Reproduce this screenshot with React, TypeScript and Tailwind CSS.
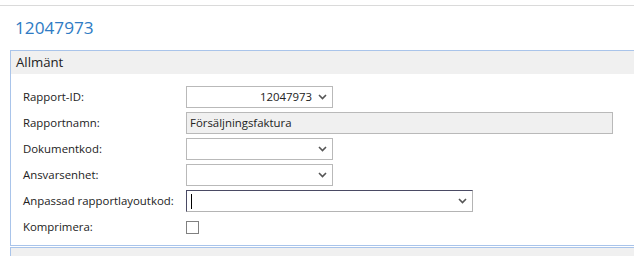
import React from 'react';

function Chevron() {
  return (
    <svg width="9" height="6" viewBox="0 0 9 6" className="shrink-0">
      <polyline points="1,1 4.5,4.5 8,1" fill="none" stroke="#555" strokeWidth="1.6" />
    </svg>
  );
}

function SelectBox({ value, width, focused }: { value?: string; width: string; focused?: boolean }) {
  return (
    <div
      className={`flex h-[22px] items-center border bg-white pl-[4px] pr-[5px] ${width} ${
        focused ? 'border-[#b4b4b4] border-t-[#4a4a64] border-l-[#4a4a64]' : 'border-[#b9b9b9]'
      }`}
    >
      <div className="flex-1 text-right text-[11.4px] text-[#222]">
        {focused ? <div className="h-[15px] w-px bg-black" /> : value}
      </div>
      <div className="ml-[6px]">
        <Chevron />
      </div>
    </div>
  );
}

export default function App() {
  const labelCls = 'w-[163px] shrink-0 text-[11.4px] text-[#222]';
  return (
    <div
      className="relative h-[256px] w-[634px] overflow-hidden bg-white"
      style={{ fontFamily: '"Open Sans", "Noto Sans", sans-serif' }}
    >
      <div className="h-[5px]" />
      <div className="h-px bg-[#dadada]" />
      <div className="pl-[15px] pt-[10px] text-[17.2px] leading-[24px] text-[#2e7bc4]">12047973</div>

      <div className="ml-[10px] mt-[10px] w-[700px] border border-[#a9c4ea]">
        <div className="h-[23px] bg-[#f0f0f0] pl-[5px] text-[13.2px] leading-[22px] text-[#222]">Allmänt</div>
        <div className="flex flex-col gap-[4px] pb-[7px] pl-[12px] pt-[12px]">
          <div className="flex h-[22px] items-center">
            <div className={labelCls}>Rapport-ID:</div>
            <SelectBox value="12047973" width="w-[147px]" />
          </div>
          <div className="flex h-[22px] items-center">
            <div className={labelCls}>Rapportnamn:</div>
            <div className="flex h-[22px] w-[427px] items-center border border-[#b9b9b9] bg-[#f0f0f0] pl-[3px] text-[11.4px] text-[#222]">
              Försäljningsfaktura
            </div>
          </div>
          <div className="flex h-[22px] items-center">
            <div className={labelCls}>Dokumentkod:</div>
            <SelectBox width="w-[147px]" />
          </div>
          <div className="flex h-[22px] items-center">
            <div className={labelCls}>Ansvarsenhet:</div>
            <SelectBox width="w-[147px]" />
          </div>
          <div className="flex h-[22px] items-center">
            <div className={labelCls}>Anpassad rapportlayoutkod:</div>
            <SelectBox width="w-[287px]" focused />
          </div>
          <div className="flex h-[22px] items-center">
            <div className={labelCls}>Komprimera:</div>
            <div className="h-[13px] w-[13px] border border-[#808080] bg-white" />
          </div>
        </div>
      </div>

      <div className="ml-[10px] mt-px h-[20px] w-[700px] border-t border-l border-[#a9c4ea] bg-[#f0f0f0]" />
    </div>
  );
}
